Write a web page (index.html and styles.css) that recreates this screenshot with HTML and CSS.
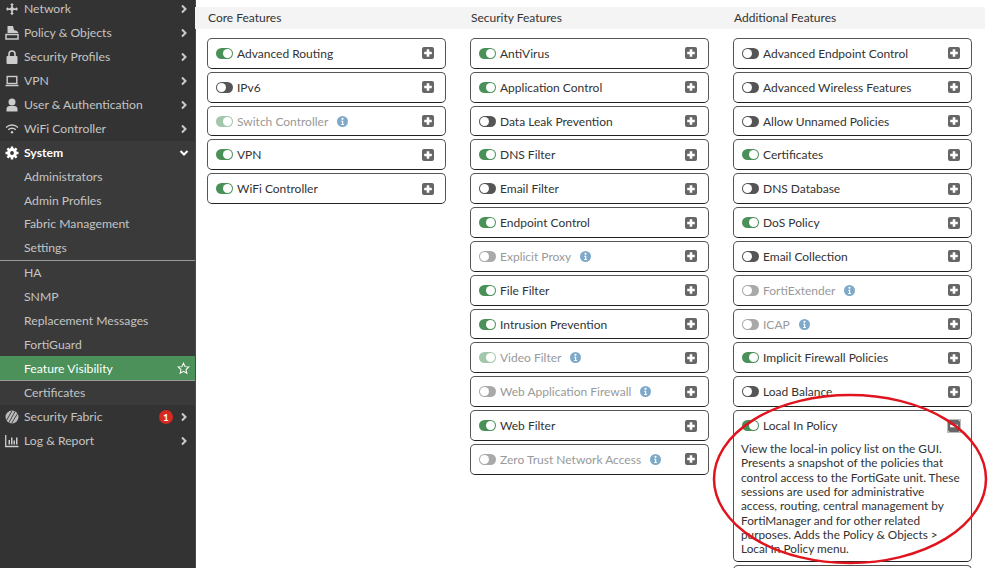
FILE: index.html
```html
<!DOCTYPE html>
<html lang="en">
<head>
<meta charset="utf-8">
<title>Feature Visibility</title>
<link rel="stylesheet" href="styles.css">
</head>
<body>
<svg class="defs" width="0" height="0" aria-hidden="true">
  <symbol id="plus" viewBox="0 0 12 12"><rect width="12" height="12" rx="2" fill="#666"/><path d="M6 2.200v7.600M2.200 6h7.600" stroke="#fff" stroke-width="2.600"/></symbol>
  <symbol id="minus" viewBox="0 0 12 12"><rect width="12" height="12" rx="2" fill="#666"/><path d="M2.200 6h7.600" stroke="#fff" stroke-width="2.600"/></symbol>
  <symbol id="info" viewBox="0 0 11 11"><circle cx="5.500" cy="5.500" r="5.500" fill="#7fa9c9"/><circle cx="5.500" cy="2.800" r="1.100" fill="#fff"/><path d="M4.200 4.700h2v3.200h.8v1H4.200v-1h.8V5.700h-.8z" fill="#fff"/></symbol>
  <symbol id="chev" viewBox="0 0 8 10"><path d="M2 1.500 5.500 5 2 8.500" fill="none" stroke="currentColor" stroke-width="2"/></symbol>
</svg>
<div class="app">
  <nav class="side">
    <a class="nav"><svg class="ico" viewBox="-1 -1 16 16"><path d="M7 0 9.200 2.500H8V6h3.500V4.800L14 7l-2.500 2.200V8H8v3.500h1.200L7 14l-2.200-2.500H6V8H2.500v1.200L0 7l2.500-2.200V6H6V2.500H4.800z" fill="#ccc"/><circle cx="7" cy="7" r="2.200" fill="#ccc"/></svg><span class="t">Network</span><svg class="chev"><use href="#chev"/></svg></a>
    <a class="nav"><svg class="ico" viewBox="0 0 14 14"><path d="M2.500 0H8l1 4 3 1 1.500 2H2.500z" fill="#ccc"/><path d="M1 8.500h12V13H1z" fill="none" stroke="#ccc" stroke-width="1.500"/></svg><span class="t">Policy &amp; Objects</span><svg class="chev"><use href="#chev"/></svg></a>
    <a class="nav"><svg class="ico" viewBox="0 0 14 14"><path d="M4 6V4a3 3 0 0 1 6 0v2" fill="none" stroke="#ccc" stroke-width="1.600"/><rect x="1.500" y="6" width="11" height="8" rx="1" fill="#ccc"/></svg><span class="t">Security Profiles</span><svg class="chev"><use href="#chev"/></svg></a>
    <a class="nav"><svg class="ico" viewBox="0 0 14 14"><rect x="2.200" y="2.500" width="9.600" height="7" fill="none" stroke="#ccc" stroke-width="1.400"/><path d="M.5 11.500h13" stroke="#ccc" stroke-width="1.500"/></svg><span class="t">VPN</span><svg class="chev"><use href="#chev"/></svg></a>
    <a class="nav"><svg class="ico" viewBox="0 0 14 14"><circle cx="7" cy="4" r="3.500" fill="#ccc"/><path d="M1.500 13.500V11c0-2 1.500-3 3-3h5c1.500 0 3 1 3 3v2.500z" fill="#ccc"/></svg><span class="t">User &amp; Authentication</span><svg class="chev"><use href="#chev"/></svg></a>
    <a class="nav"><svg class="ico" viewBox="0 0 14 14"><path d="M1 5.500a8.500 8.500 0 0 1 12 0M3.200 7.800a5.400 5.400 0 0 1 7.600 0" fill="none" stroke="#ccc" stroke-width="1.300"/><circle cx="7" cy="10.300" r="1.200" fill="#ccc"/></svg><span class="t">WiFi Controller</span><svg class="chev"><use href="#chev"/></svg></a>
    <div class="group">
      <a class="nav head"><svg class="ico" viewBox="0 0 14 14"><circle cx="7" cy="7" r="3.400" fill="none" stroke="#fff" stroke-width="3"/><path d="M7 .5v13M.5 7h13M2.400 2.400l9.200 9.200M11.600 2.400l-9.200 9.200" stroke="#fff" stroke-width="2.400" stroke-dasharray="2.400 8.200"/></svg><span class="t">System</span><svg class="chev down"><use href="#chev"/></svg></a>
      <a class="nav sub">Administrators</a>
      <a class="nav sub">Admin Profiles</a>
      <a class="nav sub">Fabric Management</a>
      <a class="nav sub rule">Settings</a>
      <a class="nav sub">HA</a>
      <a class="nav sub">SNMP</a>
      <a class="nav sub">Replacement Messages</a>
      <a class="nav sub">FortiGuard</a>
      <a class="nav sub active"><span class="t">Feature Visibility</span><svg class="star" viewBox="0 0 14 14"><path d="M7 1.300 8.700 5l4 .4-3 2.700.9 4L7 10l-3.600 2.100.9-4-3-2.700 4-.4z" fill="none" stroke="#fff" stroke-width="1.100"/></svg></a>
      <a class="nav sub">Certificates</a>
    </div>
    <a class="nav"><svg class="ico" viewBox="0 0 14 14"><circle cx="7" cy="7" r="6.500" fill="#bbb"/><path d="M4 12.500 10 1.500M6.500 13.500l6-10M1.800 10 7 .8" stroke="#333" stroke-width=".9"/></svg><span class="t">Security Fabric</span><span class="badge">1</span><svg class="chev"><use href="#chev"/></svg></a>
    <a class="nav"><svg class="ico" viewBox="0 0 14 14"><path d="M.7 1v11.500h12.800" fill="none" stroke="#ccc" stroke-width="1.300"/><path d="M3.500 6h1.500v4.500H3.500zM6 3.500h1.500v7H6zM8.500 6.500H10v4H8.500zM11 3.500h1.500v7H11z" fill="#ccc"/></svg><span class="t">Log &amp; Report</span><svg class="chev"><use href="#chev"/></svg></a>
  </nav>
  <main class="main">
    <section class="col">
      <h2 class="title">Core Features</h2>
      <div class="card"><div class="row"><i class="tg on"></i><span class="lb">Advanced Routing</span><svg class="pl"><use href="#plus"/></svg></div></div>
      <div class="card"><div class="row"><i class="tg"></i><span class="lb">IPv6</span><svg class="pl"><use href="#plus"/></svg></div></div>
      <div class="card"><div class="row dis"><i class="tg on"></i><span class="lb">Switch Controller</span><svg class="in"><use href="#info"/></svg><svg class="pl"><use href="#plus"/></svg></div></div>
      <div class="card"><div class="row"><i class="tg on"></i><span class="lb">VPN</span><svg class="pl"><use href="#plus"/></svg></div></div>
      <div class="card"><div class="row"><i class="tg on"></i><span class="lb">WiFi Controller</span><svg class="pl"><use href="#plus"/></svg></div></div>
    </section>
    <section class="col">
      <h2 class="title">Security Features</h2>
      <div class="card"><div class="row"><i class="tg on"></i><span class="lb">AntiVirus</span><svg class="pl"><use href="#plus"/></svg></div></div>
      <div class="card"><div class="row"><i class="tg on"></i><span class="lb">Application Control</span><svg class="pl"><use href="#plus"/></svg></div></div>
      <div class="card"><div class="row"><i class="tg"></i><span class="lb">Data Leak Prevention</span><svg class="pl"><use href="#plus"/></svg></div></div>
      <div class="card"><div class="row"><i class="tg on"></i><span class="lb">DNS Filter</span><svg class="pl"><use href="#plus"/></svg></div></div>
      <div class="card"><div class="row"><i class="tg"></i><span class="lb">Email Filter</span><svg class="pl"><use href="#plus"/></svg></div></div>
      <div class="card"><div class="row"><i class="tg on"></i><span class="lb">Endpoint Control</span><svg class="pl"><use href="#plus"/></svg></div></div>
      <div class="card"><div class="row dis"><i class="tg"></i><span class="lb">Explicit Proxy</span><svg class="in"><use href="#info"/></svg><svg class="pl"><use href="#plus"/></svg></div></div>
      <div class="card"><div class="row"><i class="tg on"></i><span class="lb">File Filter</span><svg class="pl"><use href="#plus"/></svg></div></div>
      <div class="card"><div class="row"><i class="tg on"></i><span class="lb">Intrusion Prevention</span><svg class="pl"><use href="#plus"/></svg></div></div>
      <div class="card"><div class="row dis"><i class="tg on"></i><span class="lb">Video Filter</span><svg class="in"><use href="#info"/></svg><svg class="pl"><use href="#plus"/></svg></div></div>
      <div class="card"><div class="row dis"><i class="tg"></i><span class="lb">Web Application Firewall</span><svg class="in"><use href="#info"/></svg><svg class="pl"><use href="#plus"/></svg></div></div>
      <div class="card"><div class="row"><i class="tg on"></i><span class="lb">Web Filter</span><svg class="pl"><use href="#plus"/></svg></div></div>
      <div class="card"><div class="row dis"><i class="tg"></i><span class="lb">Zero Trust Network Access</span><svg class="in"><use href="#info"/></svg><svg class="pl"><use href="#plus"/></svg></div></div>
    </section>
    <section class="col">
      <h2 class="title">Additional Features</h2>
      <div class="card"><div class="row"><i class="tg"></i><span class="lb">Advanced Endpoint Control</span><svg class="pl"><use href="#plus"/></svg></div></div>
      <div class="card"><div class="row"><i class="tg"></i><span class="lb">Advanced Wireless Features</span><svg class="pl"><use href="#plus"/></svg></div></div>
      <div class="card"><div class="row"><i class="tg"></i><span class="lb">Allow Unnamed Policies</span><svg class="pl"><use href="#plus"/></svg></div></div>
      <div class="card"><div class="row"><i class="tg on"></i><span class="lb">Certificates</span><svg class="pl"><use href="#plus"/></svg></div></div>
      <div class="card"><div class="row"><i class="tg"></i><span class="lb">DNS Database</span><svg class="pl"><use href="#plus"/></svg></div></div>
      <div class="card"><div class="row"><i class="tg on"></i><span class="lb">DoS Policy</span><svg class="pl"><use href="#plus"/></svg></div></div>
      <div class="card"><div class="row"><i class="tg"></i><span class="lb">Email Collection</span><svg class="pl"><use href="#plus"/></svg></div></div>
      <div class="card"><div class="row dis"><i class="tg"></i><span class="lb">FortiExtender</span><svg class="in"><use href="#info"/></svg><svg class="pl"><use href="#plus"/></svg></div></div>
      <div class="card"><div class="row dis"><i class="tg"></i><span class="lb">ICAP</span><svg class="in"><use href="#info"/></svg><svg class="pl"><use href="#plus"/></svg></div></div>
      <div class="card"><div class="row"><i class="tg on"></i><span class="lb">Implicit Firewall Policies</span><svg class="pl"><use href="#plus"/></svg></div></div>
      <div class="card"><div class="row"><i class="tg"></i><span class="lb">Load Balance</span><svg class="pl"><use href="#plus"/></svg></div></div>
      <div class="card open">
        <div class="row"><i class="tg on"></i><span class="lb">Local In Policy</span><svg class="pl focus"><use href="#minus"/></svg></div>
        <p class="desc">View the local-in policy list on the GUI. Presents a snapshot of the policies that control access to the FortiGate unit. These sessions are used for administrative access, routing, central management by FortiManager and for other related purposes. Adds the Policy &amp; Objects &gt; Local In Policy menu.</p>
      </div>
      <div class="card next"></div>
    </section>
    <svg class="mark" viewBox="0 0 276 172" aria-hidden="true"><ellipse cx="137" cy="86" rx="136" ry="84" fill="none" stroke="#e0141e" stroke-width="2.500"/></svg>
  </main>
</div>
</body>
</html>
```
FILE: styles.css
```css
* { box-sizing: border-box; }
html, body { margin: 0; height: 100%; overflow: hidden; }
body { font-family: Lato, "Open Sans", sans-serif; font-size: 12px; color: #333; background: #fff; }
.defs { position: absolute; }
.app { display: flex; height: 568px; overflow: hidden; }

.side { flex: 0 0 196px; background: #333; color: #ccc; margin-top: -3.500px; height: 571.500px; border-right: 1px solid #4a4a4a; font-size: 12.200px; }
.nav { display: flex; align-items: center; height: 24px; padding-left: 5px; color: #c4c4c4; white-space: nowrap; }
.ico { flex: 0 0 14px; width: 14px; height: 14px; margin-right: 5px; }
.t { flex: 1; }
.chev { width: 8px; height: 10px; margin-right: 7px; color: #ccc; }
.chev.down { transform: rotate(90deg); color: #fff; }
.group { background: #3a3a3a; }
.head { color: #fff; font-weight: 700; }
.sub { padding-left: 24px; height: 23.800px; }
.rule { border-bottom: 1px solid #999; height: 25px; }
.active { background: #4b9159; color: #fff; border-bottom: 1px solid #999; height: 25px; padding-right: 5px; }
.star { width: 13px; height: 13px; }
.badge { width: 14px; height: 14px; border-radius: 50%; background: #d42a20; color: #fff; font-size: 10px; font-weight: 700; text-align: center; line-height: 14px; margin-right: 7px; }

.main { position: relative; flex: 1; display: flex; gap: 24px; padding: 7px 0 0 11px; background: #fff; }
.col { flex: 0 0 239px; display: flex; flex-direction: column; gap: 3px; }
.title { margin: 0 -13px 6.500px -12px; padding-left: 13px; height: 21.500px; line-height: 22px; font-size: 12px; font-weight: 400; color: #333; background: #f4f4f4; }
.card { flex: 0 0 auto; border: 1px solid #555; border-bottom-color: #222; border-radius: 5px; background: #fff; }
.row { display: flex; align-items: center; height: 28.830px; padding: 0 11px 0 8px; }
.dis .lb { color: #999; }
.dis .tg { opacity: .5; }
.tg { flex: 0 0 17px; width: 17px; height: 11px; border-radius: 6px; background: #555; position: relative; margin-right: 4px; }
.tg::after { content: ""; position: absolute; left: 1px; top: 1px; width: 9px; height: 9px; border-radius: 50%; background: #fff; }
.tg.on { background: #4a9159; }
.tg.on::after { left: 7px; }
.lb { white-space: nowrap; }
.in { width: 11px; height: 11px; margin-left: 9px; }
.pl { width: 12px; height: 12px; margin-left: auto; }
.focus { outline: 1px solid #bbb; }
.desc { margin: 0; padding: 2px 9px 5px 7px; line-height: 14.330px; font-size: 11.800px; color: #333; }
.open { height: 152px; }
.next { height: 30.830px; }
.mark { position: absolute; left: 517px; top: 393px; width: 276px; height: 172px; overflow: visible; }
```
